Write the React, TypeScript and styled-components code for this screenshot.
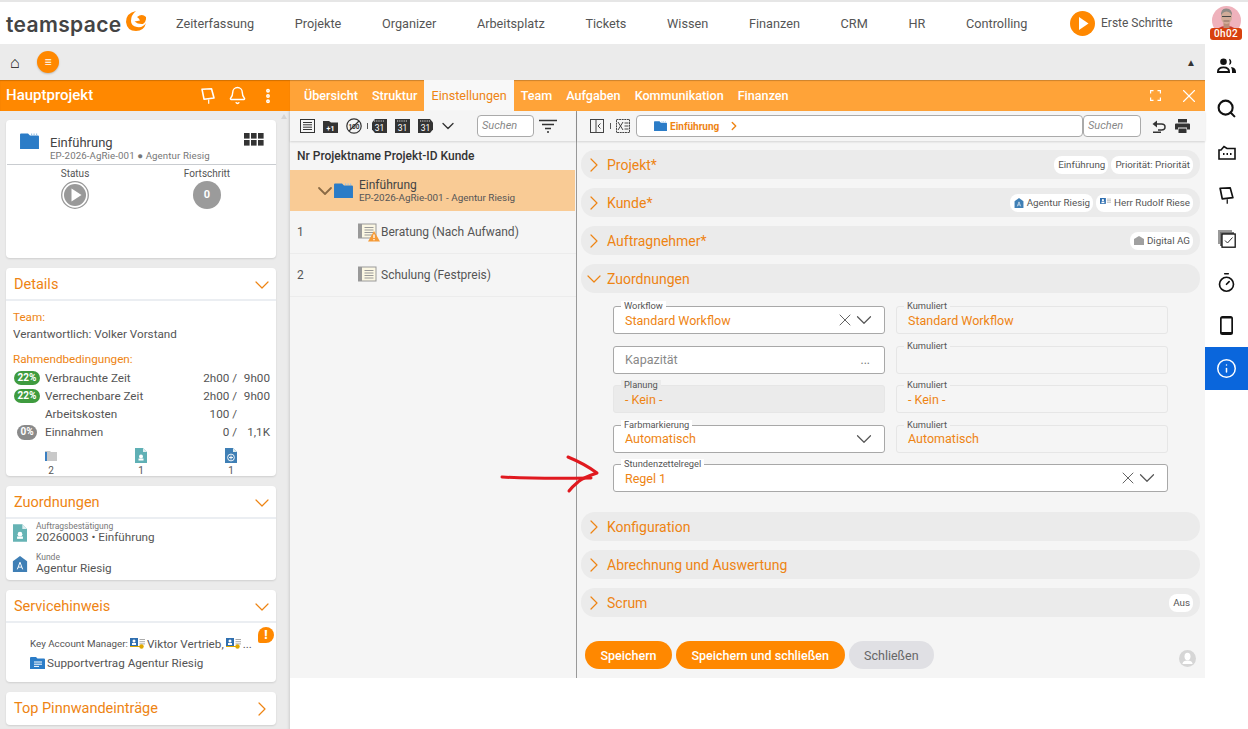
import React from "react"
import styled, { createGlobalStyle } from "styled-components"
import { Bell, ChevronDown, ChevronRight, EllipsisVertical, Info, Search, Timer, X } from "lucide-react"

const GlobalStyle = createGlobalStyle`
    html, body { margin: 0; padding: 0; background: #fff; }
    body { font-family: Roboto, "Liberation Sans", sans-serif; color: #555; overflow: hidden; }
    * { box-sizing: border-box; }
`

const ORANGE = "#ff8800"
const TEXT_ORANGE = "#ee8413"

const Page = styled.div`
    position: relative;
    width: 1248px;
    height: 729px;
    overflow: hidden;
    border-top: 2px solid #e6e6e6;
`

const TopBar = styled.header`
    height: 42px;
    display: flex;
    align-items: center;
    padding-left: 6px;
`

const Logo = styled.div`
    display: flex;
    align-items: flex-start;
    width: 170px;
    gap: 4px;
    padding-top: 2px;
`

const LogoText = styled.span`
    font-family: Inter, "Open Sans", sans-serif;
    font-size: 21px;
    font-weight: 600;
    letter-spacing: 0.35px;
    line-height: 26px;
    color: #444;
    margin-top: 2px;
`

const LogoMark = styled.span`
    display: flex;
    margin-top: 1px;
`

const Nav = styled.nav`
    display: flex;
    gap: 40.7px;
    font-size: 12.7px;
    color: #555;
    width: 894px;
`

const FirstSteps = styled.div`
    display: flex;
    align-items: center;
    gap: 6px;
    font-size: 12px;
    color: #555;
    width: 142px;
`

const Avatar = styled.div`
    position: relative;
    width: 29px;
    height: 29px;
    margin-top: -6px;
`

const TimeBadge = styled.span`
    position: absolute;
    left: -2px;
    top: 22px;
    width: 32px;
    height: 12px;
    border-radius: 3px;
    background: #d8410e;
    color: #fff;
    font-size: 10px;
    font-weight: 500;
    line-height: 12px;
    text-align: center;
    letter-spacing: 0.4px;
`

const Body = styled.div`
    display: flex;
    height: 685px;
`

const Workspace = styled.div`
    width: 1205px;
    display: flex;
    flex-direction: column;
`

const SubBar = styled.div`
    height: 36px;
    background: #ebebeb;
    display: flex;
    align-items: center;
    padding: 0 9px;
    font-size: 13px;
    color: #222;
`

const HomeGlyph = styled.span`
    width: 28px;
    padding-left: 1px;
    font-size: 16px;
    color: #111;
`

const MenuBubble = styled.span`
    width: 22px;
    height: 22px;
    border-radius: 50%;
    background: ${ORANGE};
    color: #fff;
    font-size: 12px;
    line-height: 22px;
    text-align: center;
    box-shadow: 0 1px 2px rgba(0,0,0,.2);
`

const CollapseGlyph = styled.span`
    margin-left: auto;
    font-size: 10px;
    color: #333;
`

const Columns = styled.div`
    display: flex;
    height: 649px;
`

const LeftColumn = styled.aside`
    width: 290px;
    background: #ebebeb;
    display: flex;
    flex-direction: column;
    box-shadow: inset -3px 0 3px -2px rgba(0,0,0,.12);
`

const PanelHeader = styled.div`
    height: 31px;
    background: ${ORANGE};
    color: #fff;
    display: flex;
    align-items: center;
    padding: 0 13px 0 6px;
    font-size: 15px;
    font-weight: 500;
    box-shadow: inset 0 1px 1px rgba(0,0,0,.18);
`

const PanelTitle = styled.span`
    flex: 1;
    padding-bottom: 1px;
`

const PanelIcons = styled.div`
    display: flex;
    align-items: center;
    gap: 12px;
`

const Cards = styled.div`
    display: flex;
    flex-direction: column;
    gap: 10px;
    padding: 9px 14px 0 6px;
`

const Card = styled.section<{ $h: number }>`
    height: ${p => p.$h}px;
    background: #fff;
    border-radius: 4px;
    box-shadow: 0 1px 2px rgba(0,0,0,.12);
    position: relative;
`

const ProjectTop = styled.div`
    height: 45px;
    display: flex;
    padding: 13px 12px 0 13px;
    border-bottom: 1px solid #c9ccd0;
    margin-left: 1px;
`

const ProjectText = styled.div`
    flex: 1;
    padding: 2px 0 0 11px;
`

const ProjectTitle = styled.div`
    font-size: 13px;
    line-height: 15px;
    color: #444;
`

const ProjectSub = styled.div`
    font-size: 9.7px;
    line-height: 12px;
    color: #777;
    letter-spacing: 0.1px;
`

const StatusRow = styled.div`
    display: flex;
    padding-top: 2px;
`

const StatusCell = styled.div<{ $w: number }>`
    width: ${p => p.$w}px;
    display: flex;
    flex-direction: column;
    align-items: center;
    font-size: 10px;
    line-height: 13px;
    color: #555;
    gap: 1px;
`

const ProgressDot = styled.span`
    width: 28px;
    height: 28px;
    border-radius: 50%;
    background: #9b9b9b;
    color: #fff;
    font-size: 11px;
    font-weight: 700;
    line-height: 28px;
    text-align: center;
`

const CardHeader = styled.div`
    height: 33px;
    display: flex;
    align-items: center;
    justify-content: space-between;
    padding: 2px 2px 0 8px;
    font-size: 14.5px;
    color: ${TEXT_ORANGE};
    border-bottom: 2px solid #ebeef2;
`

const FlatHeader = styled(CardHeader)`
    border-bottom: 0;
    padding-top: 0;
`

const DetailsBody = styled.div`
    padding: 7px 6px 0 7px;
    font-size: 11.7px;
    color: #555;
`

const OrangeLabel = styled.div<{ $gap?: number }>`
    color: ${TEXT_ORANGE};
    line-height: 18px;
    margin-top: ${p => p.$gap || 0}px;
`

const PlainLine = styled.div`
    line-height: 17px;
`

const StatGrid = styled.div`
    display: grid;
    grid-template-columns: 27px 1fr 50px 33px;
    align-items: center;
    margin-top: 1px;
`

const Pill = styled.span<{ $grey?: boolean }>`
    margin-left: ${p => p.$grey ? "4px" : "1px"};
    height: ${p => p.$grey ? "15px" : "14px"};
    width: ${p => p.$grey ? "20px" : "26px"};
    border-radius: 8px;
    background: ${p => p.$grey ? "#8a8a8a" : "#3f9b3f"};
    color: #fff;
    font-size: 10px;
    font-weight: 700;
    line-height: 14px;
    text-align: center;
`

const StatLabel = styled.span`
    padding-left: 5px;
    line-height: 18px;
`

const StatValue = styled.span`
    text-align: right;
    line-height: 18px;
`

const CountRow = styled.div`
    display: grid;
    grid-template-columns: repeat(3, 90px);
    margin: 7px 0 0 -7px;
`

const CountCell = styled.div`
    display: flex;
    flex-direction: column;
    align-items: center;
    gap: 3px;
    font-size: 10px;
    line-height: 10px;
    color: #555;
`

const LinkRow = styled.div`
    display: flex;
    align-items: center;
    gap: 8px;
    height: 31px;
    padding-left: 6px;
`

const LinkIcon = styled.span`
    width: 16px;
    display: flex;
    justify-content: center;
`

const LinkText = styled.div`
    display: flex;
    flex-direction: column;
    font-size: 11.7px;
    line-height: 12px;
    color: #555;
`

const LinkCaption = styled.span`
    font-size: 8.5px;
    line-height: 9px;
    color: #777;
`

const ZuordBody = styled.div`
    margin-top: -2px;
`

const ServiceBody = styled.div`
    padding: 11px 0 0 24px;
    font-size: 11.7px;
    color: #555;
`

const ServiceLine = styled.div`
    display: flex;
    align-items: center;
    gap: 2px;
    height: 19px;
    white-space: nowrap;
`

const ServiceCaption = styled.span`
    font-size: 9.8px;
`

const AlertBubble = styled.span`
    position: absolute;
    right: 2px;
    top: 37px;
    width: 16px;
    height: 16px;
    border-radius: 50% 50% 50% 2px;
    background: ${ORANGE};
    color: #fff;
    font-size: 12px;
    font-weight: 900;
    line-height: 16px;
    text-align: center;
`

const ScrollArrow = styled.span`
    position: absolute;
    left: 281px;
    top: 3px;
    width: 0;
    height: 0;
    border-left: 3px solid transparent;
    border-right: 3px solid transparent;
    border-bottom: 5px solid #d4d4d4;
`

const LeftStage = styled.div`
    position: relative;
`

const MainPanel = styled.main`
    width: 915px;
    height: 598px;
    display: flex;
    flex-direction: column;
    background: #f5f5f5;
`

const TabBar = styled.div`
    height: 31px;
    background: #ffa338;
    display: flex;
    align-items: stretch;
    padding: 0 5px 0 7px;
    box-shadow: inset 0 2px 1px -1px rgba(0,0,0,.2);
`

const Tab = styled.div<{ $active?: boolean }>`
    padding: 0 7px;
    display: flex;
    align-items: center;
    font-size: 12.6px;
    color: ${p => p.$active ? TEXT_ORANGE : "#fff"};
    background: ${p => p.$active ? "#f8f8f8" : "transparent"};
    font-weight: ${p => p.$active ? 400 : 500};
`

const TabTools = styled.div`
    margin-left: auto;
    display: flex;
    align-items: center;
    gap: 17px;
    color: #fff;
`

const Panes = styled.div`
    flex: 1;
    display: flex;
`

const ListPane = styled.div`
    width: 287px;
    border-right: 1px solid #999;
    display: flex;
    flex-direction: column;
`

const Toolbar = styled.div`
    height: 30px;
    display: flex;
    align-items: center;
    box-shadow: 0 1px 2px rgba(0,0,0,.14);
`

const ListToolbar = styled(Toolbar)`
    padding-left: 10px;
    gap: 8px;
`

const ToolSep = styled.span`
    width: 1px;
    height: 6px;
    background: #555;
    margin: 0 -4px 0 -3px;
`

const FormSep = styled(ToolSep)`
    margin: 0 5px 0 6px;
`

const ToolChevron = styled.span`
    display: flex;
    margin-left: -3px;
    color: #333;
`

const SearchBox = styled.div<{ $w: number }>`
    width: ${p => p.$w}px;
    height: 22px;
    border: 1px solid #aaa;
    border-radius: 4px;
    background: #fff;
    color: #888;
    font-size: 11px;
    font-style: italic;
    line-height: 20px;
    padding-left: 4px;
`

const ListSearch = styled(SearchBox)`
    margin: 0 -3px 0 11px;
`

const ListHead = styled.div`
    height: 29px;
    display: flex;
    align-items: center;
    padding-left: 7px;
    font-size: 12px;
    font-weight: 500;
    color: #333;
`

const SelectedRow = styled.div`
    height: 41px;
    background: #f9cb95;
    margin-right: 1px;
    display: flex;
    align-items: center;
    padding-left: 23px;
    gap: 2px;
`

const RowChevron = styled.span`
    display: flex;
    margin-right: -5px;
    color: #8a6a45;
`

const RowTexts = styled.div`
    padding-left: 4px;
    font-size: 12px;
    line-height: 14px;
    color: #444;
`

const RowSub = styled.div`
    font-size: 9.9px;
    line-height: 12px;
    color: #555;
`

const ListRow = styled.div`
    height: 43px;
    display: flex;
    align-items: center;
    padding-left: 7px;
    font-size: 12px;
    color: #555;
    border-bottom: 1px solid #ececec;
`

const RowNo = styled.span`
    width: 61px;
`

const RowName = styled.span`
    padding-left: 1px;
`

const FormPane = styled.div`
    flex: 1;
    display: flex;
    flex-direction: column;
`

const FormToolbar = styled(Toolbar)`
    padding-left: 13px;
`

const Crumb = styled.div`
    width: 447px;
    height: 22px;
    border: 1px solid #aaa;
    border-radius: 4px;
    background: #fff;
    display: flex;
    align-items: center;
    padding-left: 17px;
    gap: 3px;
    font-size: 10px;
    font-weight: 700;
    color: ${TEXT_ORANGE};
    margin-left: 6px;
`

const CrumbChevron = styled.span`
    display: flex;
    margin-left: 5px;
`

const FormTools = styled.div`
    display: flex;
    align-items: center;
    gap: 9px;
    margin-left: 11px;
`

const Sections = styled.div`
    padding: 9px 5px 0 4px;
    display: flex;
    flex-direction: column;
    gap: 9px;
`

const SectionBar = styled.div`
    height: 29px;
    border-radius: 14px;
    background: #ebebeb;
    display: flex;
    align-items: center;
    padding: 0 7px 0 1px;
    font-size: 14px;
    color: ${TEXT_ORANGE};
    gap: 1px;
`

const SectionTitle = styled.span`
    flex: 1;
`

const TagRow = styled.div`
    display: flex;
    gap: 3px;
`

const Tag = styled.span`
    height: 18px;
    padding: 0 3px 0 4px;
    background: #fff;
    border-radius: 8px;
    display: inline-flex;
    align-items: center;
    gap: 3px;
    font-size: 9.8px;
    color: #555;
`

const FieldGrid = styled.div`
    display: grid;
    grid-template-columns: 272px 272px;
    column-gap: 11px;
    row-gap: 11.5px;
    padding: 13px 0 11px 32px;
`

const Field = styled.div<{ $wide?: boolean; $soft?: boolean; $grey?: boolean }>`
    position: relative;
    grid-column: ${p => p.$wide ? "1 / 3" : "auto"};
    height: 28px;
    border: 1px solid ${p => p.$soft || p.$grey ? "#e6e6e6" : "#a8a8a8"};
    border-radius: 3px;
    background: ${p => p.$grey ? "#ebebeb" : p.$soft ? "#f5f5f5" : "#fff"};
    display: flex;
    align-items: center;
    padding: 0 7px 0 11px;
    font-size: 12.5px;
    color: ${TEXT_ORANGE};
`

const FieldLabel = styled.span<{ $bg?: string }>`
    position: absolute;
    left: 7px;
    top: -6px;
    padding: 0 3px;
    font-size: 9.3px;
    line-height: 10px;
    color: #555;
    background: ${p => p.$bg || "#fff"};
`

const FieldValue = styled.span<{ $muted?: boolean }>`
    flex: 1;
    color: ${p => p.$muted ? "#888" : TEXT_ORANGE};
`

const FieldTools = styled.span`
    display: flex;
    align-items: center;
    color: #555;
`

const ClearWrap = styled.span`
    display: flex;
    margin-right: -4px;
`

const Dots = styled.span`
    color: #777;
    font-size: 12px;
    margin-right: 7px;
`

const ButtonRow = styled.div`
    height: 28px;
    margin-top: 24px;
    padding: 0 8px;
    display: flex;
    align-items: center;
    gap: 4px;
`

const ActionButton = styled.button<{ $grey?: boolean }>`
    height: 28px;
    padding: 0 15.5px;
    border: 0;
    border-radius: 14px;
    background: ${p => p.$grey ? "#e0e0e4" : ORANGE};
    color: ${p => p.$grey ? "#666" : "#fff"};
    font-family: Roboto, sans-serif;
    font-size: 12.5px;
    font-weight: ${p => p.$grey ? 400 : 500};
`

const UserDot = styled.span`
    margin-left: auto;
    margin-right: 1px;
    margin-top: 7px;
    display: flex;
`

const Rail = styled.nav`
    width: 43px;
    display: flex;
    flex-direction: column;
`

const RailItem = styled.div<{ $active?: boolean }>`
    height: 43.3px;
    display: flex;
    align-items: center;
    justify-content: center;
    color: ${p => p.$active ? "#fff" : "#111"};
    background: ${p => p.$active ? "#0a66dc" : "transparent"};
`

const ArrowMark = styled.svg`
    position: absolute;
    left: 500px;
    top: 452px;
`

/* drawn icons */

const FolderIcon = ({ w = 19, color = "#2b7cc7" }: { w?: number; color?: string }) => (
    <svg width={w} height={w * 0.84} viewBox="0 0 19 16">
        <path d="M0 1.5 Q0 .5 1 .5 H8 L10 2.5 H18 Q19 2.5 19 3.5 V16 H0Z" fill={color} />
        <path d="M11 .5h1.2v1.500H11zM13.500 .5h1.200v1.500h-1.200zM16 .5h1.200v1.500H16z" fill="#9cc4e6" />
    </svg>
)

const FolderLines = () => (
    <svg width="15" height="12" viewBox="0 0 15 12">
        <path d="M0 1 Q0 0 1 0 H6 L7.500 1.500 H14 Q15 1.500 15 2.500 V12 H0Z" fill="#2b7cc7" />
        <path d="M4 5H12M4 7.200H12M4 9.400H9" stroke="#fff" strokeWidth="1" />
    </svg>
)

const PinIcon = ({ size = 16, color = "#fff" }: { size?: number; color?: string }) => (
    <svg width={size} height={size} viewBox="0 0 16 16" fill="none" stroke={color} strokeWidth="1.600">
        <path d="M2 1.200 L11.500 .8 L14 10 L4 11.200Z" strokeLinejoin="round" />
        <path d="M8.700 11.500 V15.800" strokeWidth="1.200" />
    </svg>
)

const GridIcon = () => (
    <svg width="20" height="13" viewBox="0 0 20 13" fill="#333">
        {[0, 7, 14].map(x => [0, 7].map(y => <rect key={`${x}-${y}`} x={x} y={y} width="5.600" height="5.600" />))}
    </svg>
)

const StatusPlay = () => (
    <svg width="28" height="28" viewBox="0 0 28 28">
        <circle cx="14" cy="14" r="13.300" fill="#fff" stroke="#999" strokeWidth="1.300" />
        <circle cx="14" cy="14" r="11" fill="#999" />
        <path d="M10.500 7.500 L20.500 14 L10.500 20.500Z" fill="#fff" />
    </svg>
)

const DocIcon = ({ color, w = 12, h = 15 }: { color: string; w?: number; h?: number }) => (
    <svg width={w} height={h} viewBox="0 0 12 15">
        <path d="M0 0 H8 L12 4 V15 H0Z" fill={color} />
        <path d="M8 0 L12 4 H8Z" fill="#dfeef0" />
        <circle cx="6" cy="8.500" r="2" fill="#fff" />
        <rect x="3.500" y="10.500" width="5" height="2" fill="#fff" />
    </svg>
)

const PlusDocIcon = () => (
    <svg width="12" height="15" viewBox="0 0 12 15">
        <path d="M0 0 H8 L12 4 V15 H0Z" fill="#3f7fb5" />
        <path d="M8 0 L12 4 H8Z" fill="#dfeef0" />
        <circle cx="6" cy="9.500" r="3.400" fill="none" stroke="#fff" strokeWidth=".9" />
        <path d="M6 7.500V11.500M4 9.500H8" stroke="#fff" strokeWidth=".9" />
    </svg>
)

const CustomerIcon = ({ size = 16, color = "#3f7fb5" }: { size?: number; color?: string }) => (
    <svg width={size} height={size} viewBox="0 0 16 18">
        <path d="M0 6 L8 0 L16 6 V18 H0Z" fill={color} />
        <path d="M5 15 L8 7 L11 15 M6 12.500 H10" stroke="#fff" strokeWidth="1.100" fill="none" />
    </svg>
)

const PlainHouse = () => (
    <svg width="10" height="9" viewBox="0 0 10 9">
        <path d="M0 3 L5 0 L10 3 V9 H0Z" fill="#a0a0a0" />
    </svg>
)

const ContactIcon = ({ pin, w = 15 }: { pin?: boolean; w?: number }) => (
    <svg width={w} height={w * 11 / 15} viewBox="0 0 15 11">
        <rect x="0" y="0" width="8" height="8" fill="#2f6fb0" />
        <circle cx="4" cy="3" r="1.500" fill="#fff" />
        <rect x="2" y="5" width="4" height="2" fill="#fff" />
        <path d="M9.500 1.500H15M9.500 3.700H15M9.500 5.900H15" stroke="#aaa" strokeWidth="1" />
        {pin && <circle cx="11.500" cy="8.500" r="2.200" fill="#e0a800" />}
        {pin && <path d="M0 8.500H10" stroke="#e0a800" strokeWidth="1" />}
    </svg>
)

const NoteIcon = ({ warn }: { warn?: boolean }) => (
    <svg width="22" height="19" viewBox="0 0 22 19">
        <rect x="0" y="1" width="18" height="14" fill="#fbf7e3" stroke="#999" strokeWidth="1" />
        <rect x="0" y="1" width="4" height="14" fill="#999" />
        <path d="M6.500 4.500H15.500M6.500 7H15.500M6.500 9.500H15.500M6.500 12H15.500" stroke="#999" strokeWidth="1" />
        {warn && <path d="M16 8 L22 18.500 H10Z" fill="#f59a36" />}
        {warn && <path d="M16 11.500V15M16 16V17.200" stroke="#fff" strokeWidth="1.300" />}
    </svg>
)

const ListGlyph = () => (
    <svg width="15" height="14" viewBox="0 0 15 14" fill="none" stroke="#333" strokeWidth="1">
        <rect x=".5" y=".5" width="14" height="13" />
        <path d="M3 3.500H12M3 5.800H12M3 8.200H12M3 10.500H12" />
    </svg>
)

const FolderPlus = () => (
    <svg width="15" height="13" viewBox="0 0 15 13">
        <path d="M0 1H6L8 2.500H15V13H0Z" fill="#333" />
        <text x="7.500" y="10.500" fontSize="7" fontWeight="700" fill="#fff" textAnchor="middle" fontFamily="Roboto">+1</text>
    </svg>
)

const NoCircle = () => (
    <svg width="16" height="16" viewBox="0 0 16 16" fill="none" stroke="#333">
        <circle cx="8" cy="8" r="7.200" strokeWidth="1.200" />
        <path d="M3 13 L13 3" strokeWidth="1.200" />
        <text x="8" y="10.500" fontSize="6.500" fontWeight="700" fill="#333" stroke="none" textAnchor="middle" fontFamily="Roboto">100</text>
    </svg>
)

const CALENDAR_SHAPES = {
    left: "M3 0H15V14H3L0 10.500V3.500Z",
    plain: "M0 0H15V14H0Z",
    right: "M0 0H12L15 3.500V10.500L12 14H0Z",
}

const CalendarIcon = ({ shape }: { shape: keyof typeof CALENDAR_SHAPES }) => (
    <svg width="15" height="14" viewBox="0 0 15 14">
        <path d={CALENDAR_SHAPES[shape]} fill="#333" />
        <path d="M2 2H13" stroke="#ddd" strokeWidth="1.200" strokeDasharray="1.200 1" />
        <text x="7.500" y="12" fontSize="8.500" fill="#fff" textAnchor="middle" fontFamily="Roboto">31</text>
    </svg>
)

const FilterIcon = () => (
    <svg width="18" height="14" viewBox="0 0 18 14" stroke="#333" strokeWidth="1.600">
        <path d="M0 1.500H18M3 5.500H15M6 9.500H12M8 13H10" />
    </svg>
)

const SplitIcon = () => (
    <svg width="14" height="14" viewBox="0 0 14 14" fill="none" stroke="#444" strokeWidth="1">
        <rect x=".5" y=".5" width="13" height="13" />
        <path d="M6 .5V13.500M10.500 4.500L8 7L10.500 9.500" />
    </svg>
)

const CrossListIcon = () => (
    <svg width="14" height="14" viewBox="0 0 14 14" fill="none" stroke="#444" strokeWidth="1">
        <rect x=".5" y=".5" width="13" height="13" strokeDasharray="2 .6" />
        <path d="M2 3L7 11M7 3L2 11M8.500 4H12.500M8.500 7H12.500M8.500 10H12.500" />
    </svg>
)

const UndoIcon = () => (
    <svg width="14" height="13" viewBox="0 0 14 13" fill="none" stroke="#333" strokeWidth="1.500">
        <path d="M4 4H9.500Q13 4 13 7T9.500 10H6M1 12.200H9" />
        <path d="M5 0.500V7.500L0.500 4Z" fill="#333" stroke="none" />
    </svg>
)

const PrintIcon = () => (
    <svg width="15" height="14" viewBox="0 0 15 14" fill="#333">
        <rect x="3" y="0" width="9" height="3.500" />
        <path d="M1 4.500H14Q15 4.500 15 5.500V10.500H12V8.500H3V10.500H0V5.500Q0 4.500 1 4.500Z" />
        <rect x="3.500" y="9.500" width="8" height="4.500" />
    </svg>
)

const FullscreenIcon = () => (
    <svg width="11" height="11" viewBox="0 0 11 11" fill="none" stroke="#fff" strokeWidth="1.200">
        <path d="M0.600 3.500V.6H3.500M7.500 .6H10.400V3.500M10.400 7.500V10.400H7.500M3.500 10.400H.6V7.500" />
    </svg>
)

const PlayBig = () => (
    <svg width="25" height="25" viewBox="0 0 25 25">
        <circle cx="12.500" cy="12.500" r="12.500" fill={ORANGE} />
        <path d="M9 6 L18.500 12.500 L9 19Z" fill="#fff" />
    </svg>
)

const SwooshLogo = () => (
    <svg width="20" height="20" viewBox="0 0 20 20" fill={ORANGE}>
        <path d="M10 0 Q0 2 0 11 Q1 20 10 20 Q18 20 20 12 Q17 17 11 16 Q5 15 5 10 Q5 4 10 0Z" />
        <path d="M11 6 Q16 2 20 6 Q20.500 11 17 13 Q12 13.500 8.500 10.500 L14 9.500 Q13 7 11 6Z" />
    </svg>
)

const Portrait = () => (
    <svg width="29" height="29" viewBox="0 0 29 29">
        <clipPath id="face"><circle cx="14.500" cy="14.500" r="14.500" /></clipPath>
        <g clipPath="url(#face)">
            <rect width="29" height="29" fill="#efb2bc" />
            <path d="M3 29 Q4 20 14.500 20 Q25 20 26 29Z" fill="#c8352f" />
            <rect x="11.500" y="16" width="6" height="6" fill="#b98d79" />
            <ellipse cx="14.500" cy="11" rx="5.500" ry="7" fill="#d0ab98" />
            <path d="M9 10 Q8.500 2 14.500 2.500 Q20.500 2.500 20 10 Q19 6 14.500 5.500 Q10 6 9 10Z" fill="#8f8b86" />
            <path d="M10 10.500H19" stroke="#444" strokeWidth="1.100" />
            <path d="M11.500 15H17.500" stroke="#8a6a5e" strokeWidth="1" />
        </g>
    </svg>
)

const PeopleIcon = () => (
    <svg width="19" height="15" viewBox="0 0 19 15" fill="#111">
        <circle cx="6.500" cy="3.800" r="3.300" />
        <path d="M0 14 Q0 8.500 6.500 8.500 Q13 8.500 13 14V15H0Z M2 13H11Q10.500 10.300 6.500 10.300Q2.500 10.300 2 13Z" fillRule="evenodd" />
        <path d="M12 .8 A3.200 3.200 0 0 1 12 7 Q13.500 4 12 .8Z" />
        <path d="M14 9 Q19 9.500 19 14V15H15V13Q15 11 14 9Z" />
    </svg>
)

const FolderDots = () => (
    <svg width="18" height="15" viewBox="0 0 18 15" fill="none" stroke="#111" strokeWidth="1.600">
        <path d="M1 14V5H3L6 1.500L9 3.500H17V14Z" />
        <path d="M5 9H6.500M8.500 9H10M12 9H13.500" strokeWidth="2" />
    </svg>
)

const StackCheck = () => (
    <svg width="18" height="18" viewBox="0 0 18 18">
        <rect x="0" y="0" width="14" height="14" fill="#9a9a9a" />
        <rect x="2" y="2" width="14" height="14" fill="#777" />
        <rect x="4" y="4" width="13.200" height="13.200" fill="#fff" stroke="#111" strokeWidth="1.300" />
        <path d="M7 10.500L9.500 13L14.500 7.500" fill="none" stroke="#333" strokeWidth="1" />
    </svg>
)

const PhoneIcon = () => (
    <svg width="13" height="19" viewBox="0 0 13 19">
        <rect x="0" y="0" width="13" height="19" rx="2.500" fill="#111" />
        <rect x="1.700" y="2.500" width="9.600" height="13.500" fill="#fff" />
    </svg>
)

const UserCircle = () => (
    <svg width="17" height="17" viewBox="0 0 17 17">
        <circle cx="8.500" cy="8.500" r="8.500" fill="#d6d6d6" />
        <ellipse cx="8.500" cy="6.500" rx="3" ry="3.700" fill="#fff" />
        <path d="M3.500 13.500Q4 10.500 8.500 10.500T13.500 13.500V14H3.500Z" fill="#fff" />
    </svg>
)

const RedArrow = () => (
    <ArrowMark width="100" height="45" viewBox="0 0 100 45" fill="none" stroke="#e0191f" strokeWidth="3" strokeLinecap="round" strokeLinejoin="round">
        <path d="M2 23 Q40 25 91 24" />
        <path d="M68 3 Q85 10 97 19 Q82 24 78 28 Q72 33 69 37" />
    </ArrowMark>
)

const CardChevron = () => <ChevronDown size={24} strokeWidth={1.2} />

const SectionChevron = ({ open }: { open?: boolean }) =>
    open ? <ChevronDown size={24} strokeWidth={1.2} /> : <ChevronRight size={24} strokeWidth={1.2} />

const FieldChevron = () => <ChevronDown size={26} strokeWidth={1.1} />
const FieldClear = () => <ClearWrap><X size={20} strokeWidth={1.1} /></ClearWrap>

const NAV_ITEMS = ["Zeiterfassung", "Projekte", "Organizer", "Arbeitsplatz", "Tickets", "Wissen", "Finanzen", "CRM", "HR", "Controlling"]
const TABS = ["Übersicht", "Struktur", "Einstellungen", "Team", "Aufgaben", "Kommunikation", "Finanzen"]

const STATS = [
    { pill: "22%", label: "Verbrauchte Zeit", a: "2h00 /", b: "9h00" },
    { pill: "22%", label: "Verrechenbare Zeit", a: "2h00 /", b: "9h00" },
    { pill: "", label: "Arbeitskosten", a: "100 /", b: "" },
    { pill: "0%", label: "Einnahmen", a: "0 /", b: "1,1K" },
]

function LeftPanel() {
    return (
        <LeftColumn>
            <PanelHeader>
                <PanelTitle>Hauptprojekt</PanelTitle>
                <PanelIcons>
                    <PinIcon size={16} />
                    <Bell size={19} strokeWidth={1.8} />
                    <EllipsisVertical size={18} strokeWidth={3.2} />
                </PanelIcons>
            </PanelHeader>
            <LeftStage>
                <ScrollArrow />
                <Cards>
                    <Card $h={138}>
                        <ProjectTop>
                            <FolderIcon />
                            <ProjectText>
                                <ProjectTitle>Einführung</ProjectTitle>
                                <ProjectSub>EP-2026-AgRie-001 ● Agentur Riesig</ProjectSub>
                            </ProjectText>
                            <GridIcon />
                        </ProjectTop>
                        <StatusRow>
                            <StatusCell $w={138}><span>Status</span><StatusPlay /></StatusCell>
                            <StatusCell $w={126}><span>Fortschritt</span><ProgressDot>0</ProgressDot></StatusCell>
                        </StatusRow>
                    </Card>
                    <Card $h={208}>
                        <CardHeader>Details<CardChevron /></CardHeader>
                        <DetailsBody>
                            <OrangeLabel>Team:</OrangeLabel>
                            <PlainLine>Verantwortlich: Volker Vorstand</PlainLine>
                            <OrangeLabel $gap={7}>Rahmendbedingungen:</OrangeLabel>
                            <StatGrid>
                                {STATS.map(s => (
                                    <React.Fragment key={s.label}>
                                        {s.pill ? <Pill $grey={s.pill === "0%"}>{s.pill}</Pill> : <span />}
                                        <StatLabel>{s.label}</StatLabel>
                                        <StatValue>{s.a}</StatValue>
                                        <StatValue>{s.b}</StatValue>
                                    </React.Fragment>
                                ))}
                            </StatGrid>
                            <CountRow>
                                <CountCell>
                                    <svg width="12" height="15" viewBox="0 0 12 15"><path d="M0 3H5L6 4H12V13H0Z" fill="#c9c9c9" /><rect width="2" height="9" y="4" fill="#3a7fc2" /></svg>
                                    2
                                </CountCell>
                                <CountCell><DocIcon color="#5fb0b5" />1</CountCell>
                                <CountCell><PlusDocIcon />1</CountCell>
                            </CountRow>
                        </DetailsBody>
                    </Card>
                    <Card $h={94}>
                        <CardHeader>Zuordnungen<CardChevron /></CardHeader>
                        <ZuordBody>
                            <LinkRow>
                                <LinkIcon><DocIcon color="#66b3b4" w={14} h={18} /></LinkIcon>
                                <LinkText><LinkCaption>Auftragsbestätigung</LinkCaption>20260003 • Einführung</LinkText>
                            </LinkRow>
                            <LinkRow>
                                <LinkIcon><CustomerIcon /></LinkIcon>
                                <LinkText><LinkCaption>Kunde</LinkCaption>Agentur Riesig</LinkText>
                            </LinkRow>
                        </ZuordBody>
                    </Card>
                    <Card $h={92}>
                        <CardHeader>Servicehinweis<CardChevron /></CardHeader>
                        <AlertBubble>!</AlertBubble>
                        <ServiceBody>
                            <ServiceLine>
                                <ServiceCaption>Key Account Manager:</ServiceCaption>
                                <ContactIcon pin /> Viktor Vertrieb,
                                <ContactIcon pin /> ...
                            </ServiceLine>
                            <ServiceLine>
                                <FolderLines /> Supportvertrag Agentur Riesig
                            </ServiceLine>
                        </ServiceBody>
                    </Card>
                    <Card $h={33}>
                        <FlatHeader>Top Pinnwandeinträge<ChevronRight size={24} strokeWidth={1.2} /></FlatHeader>
                    </Card>
                </Cards>
            </LeftStage>
        </LeftColumn>
    )
}

function ListArea() {
    return (
        <ListPane>
            <ListToolbar>
                <ListGlyph />
                <FolderPlus />
                <NoCircle />
                <ToolSep />
                <CalendarIcon shape="left" />
                <CalendarIcon shape="plain" />
                <CalendarIcon shape="right" />
                <ToolChevron><ChevronDown size={20} strokeWidth={1.6} /></ToolChevron>
                <ListSearch $w={57}>Suchen</ListSearch>
                <FilterIcon />
            </ListToolbar>
            <ListHead>Nr Projektname Projekt-ID Kunde</ListHead>
            <SelectedRow>
                <RowChevron><ChevronDown size={24} strokeWidth={1.8} /></RowChevron>
                <FolderIcon />
                <RowTexts>
                    Einführung
                    <RowSub>EP-2026-AgRie-001 - Agentur Riesig</RowSub>
                </RowTexts>
            </SelectedRow>
            <ListRow><RowNo>1</RowNo><NoteIcon warn /><RowName>Beratung (Nach Aufwand)</RowName></ListRow>
            <ListRow><RowNo>2</RowNo><NoteIcon /><RowName>Schulung (Festpreis)</RowName></ListRow>
        </ListPane>
    )
}

function FormArea() {
    return (
        <FormPane>
            <FormToolbar>
                <SplitIcon />
                <FormSep />
                <CrossListIcon />
                <Crumb>
                    <FolderIcon w={13} />
                    Einführung
                    <CrumbChevron><ChevronRight size={14} strokeWidth={2.4} /></CrumbChevron>
                </Crumb>
                <SearchBox $w={58}>Suchen</SearchBox>
                <FormTools>
                    <UndoIcon />
                    <PrintIcon />
                </FormTools>
            </FormToolbar>
            <Sections>
                <SectionBar>
                    <SectionChevron /><SectionTitle>Projekt*</SectionTitle>
                    <TagRow><Tag>Einführung</Tag><Tag>Priorität: Priorität</Tag></TagRow>
                </SectionBar>
                <SectionBar>
                    <SectionChevron /><SectionTitle>Kunde*</SectionTitle>
                    <TagRow>
                        <Tag><CustomerIcon size={10} />Agentur Riesig</Tag>
                        <Tag><ContactIcon w={11} />Herr Rudolf Riese</Tag>
                    </TagRow>
                </SectionBar>
                <SectionBar>
                    <SectionChevron /><SectionTitle>Auftragnehmer*</SectionTitle>
                    <TagRow><Tag><PlainHouse />Digital AG</Tag></TagRow>
                </SectionBar>
                <div>
                    <SectionBar>
                        <SectionChevron open /><SectionTitle>Zuordnungen</SectionTitle>
                    </SectionBar>
                    <FieldGrid>
                        <Field>
                            <FieldLabel>Workflow</FieldLabel>
                            <FieldValue>Standard Workflow</FieldValue>
                            <FieldTools><FieldClear /><FieldChevron /></FieldTools>
                        </Field>
                        <Field $soft>
                            <FieldLabel $bg="#f5f5f5">Kumuliert</FieldLabel>
                            <FieldValue>Standard Workflow</FieldValue>
                        </Field>
                        <Field>
                            <FieldValue $muted>Kapazität</FieldValue>
                            <Dots>...</Dots>
                        </Field>
                        <Field $soft><FieldLabel $bg="#f5f5f5">Kumuliert</FieldLabel></Field>
                        <Field $grey>
                            <FieldLabel $bg="#ebebeb">Planung</FieldLabel>
                            <FieldValue>- Kein -</FieldValue>
                        </Field>
                        <Field $soft>
                            <FieldLabel $bg="#f5f5f5">Kumuliert</FieldLabel>
                            <FieldValue>- Kein -</FieldValue>
                        </Field>
                        <Field>
                            <FieldLabel>Farbmarkierung</FieldLabel>
                            <FieldValue>Automatisch</FieldValue>
                            <FieldTools><FieldChevron /></FieldTools>
                        </Field>
                        <Field $soft>
                            <FieldLabel $bg="#f5f5f5">Kumuliert</FieldLabel>
                            <FieldValue>Automatisch</FieldValue>
                        </Field>
                        <Field $wide>
                            <FieldLabel>Stundenzettelregel</FieldLabel>
                            <FieldValue>Regel 1</FieldValue>
                            <FieldTools><FieldClear /><FieldChevron /></FieldTools>
                        </Field>
                    </FieldGrid>
                </div>
                <SectionBar><SectionChevron /><SectionTitle>Konfiguration</SectionTitle></SectionBar>
                <SectionBar><SectionChevron /><SectionTitle>Abrechnung und Auswertung</SectionTitle></SectionBar>
                <SectionBar>
                    <SectionChevron /><SectionTitle>Scrum</SectionTitle>
                    <Tag>Aus</Tag>
                </SectionBar>
            </Sections>
            <ButtonRow>
                <ActionButton>Speichern</ActionButton>
                <ActionButton>Speichern und schließen</ActionButton>
                <ActionButton $grey>Schließen</ActionButton>
                <UserDot><UserCircle /></UserDot>
            </ButtonRow>
        </FormPane>
    )
}

export default function App() {
    return (
        <>
            <GlobalStyle />
            <Page>
                <TopBar>
                    <Logo>
                        <LogoText>teamspace</LogoText>
                        <LogoMark><SwooshLogo /></LogoMark>
                    </Logo>
                    <Nav>{NAV_ITEMS.map(n => <span key={n}>{n}</span>)}</Nav>
                    <FirstSteps><PlayBig />Erste Schritte</FirstSteps>
                    <Avatar><Portrait /><TimeBadge>0h02</TimeBadge></Avatar>
                </TopBar>
                <Body>
                    <Workspace>
                        <SubBar>
                            <HomeGlyph>⌂</HomeGlyph>
                            <MenuBubble>≡</MenuBubble>
                            <CollapseGlyph>▲</CollapseGlyph>
                        </SubBar>
                        <Columns>
                            <LeftPanel />
                            <MainPanel>
                                <TabBar>
                                    {TABS.map(t => <Tab key={t} $active={t === "Einstellungen"}>{t}</Tab>)}
                                    <TabTools><FullscreenIcon /><X size={22} strokeWidth={1.2} /></TabTools>
                                </TabBar>
                                <Panes>
                                    <ListArea />
                                    <FormArea />
                                </Panes>
                            </MainPanel>
                        </Columns>
                    </Workspace>
                    <Rail>
                        <RailItem><PeopleIcon /></RailItem>
                        <RailItem><Search size={21} strokeWidth={2.4} /></RailItem>
                        <RailItem><FolderDots /></RailItem>
                        <RailItem><PinIcon size={17} color="#111" /></RailItem>
                        <RailItem><StackCheck /></RailItem>
                        <RailItem><Timer size={21} strokeWidth={1.9} /></RailItem>
                        <RailItem><PhoneIcon /></RailItem>
                        <RailItem $active><Info size={21} strokeWidth={1.7} /></RailItem>
                    </Rail>
                </Body>
                <RedArrow />
            </Page>
        </>
    )
}
